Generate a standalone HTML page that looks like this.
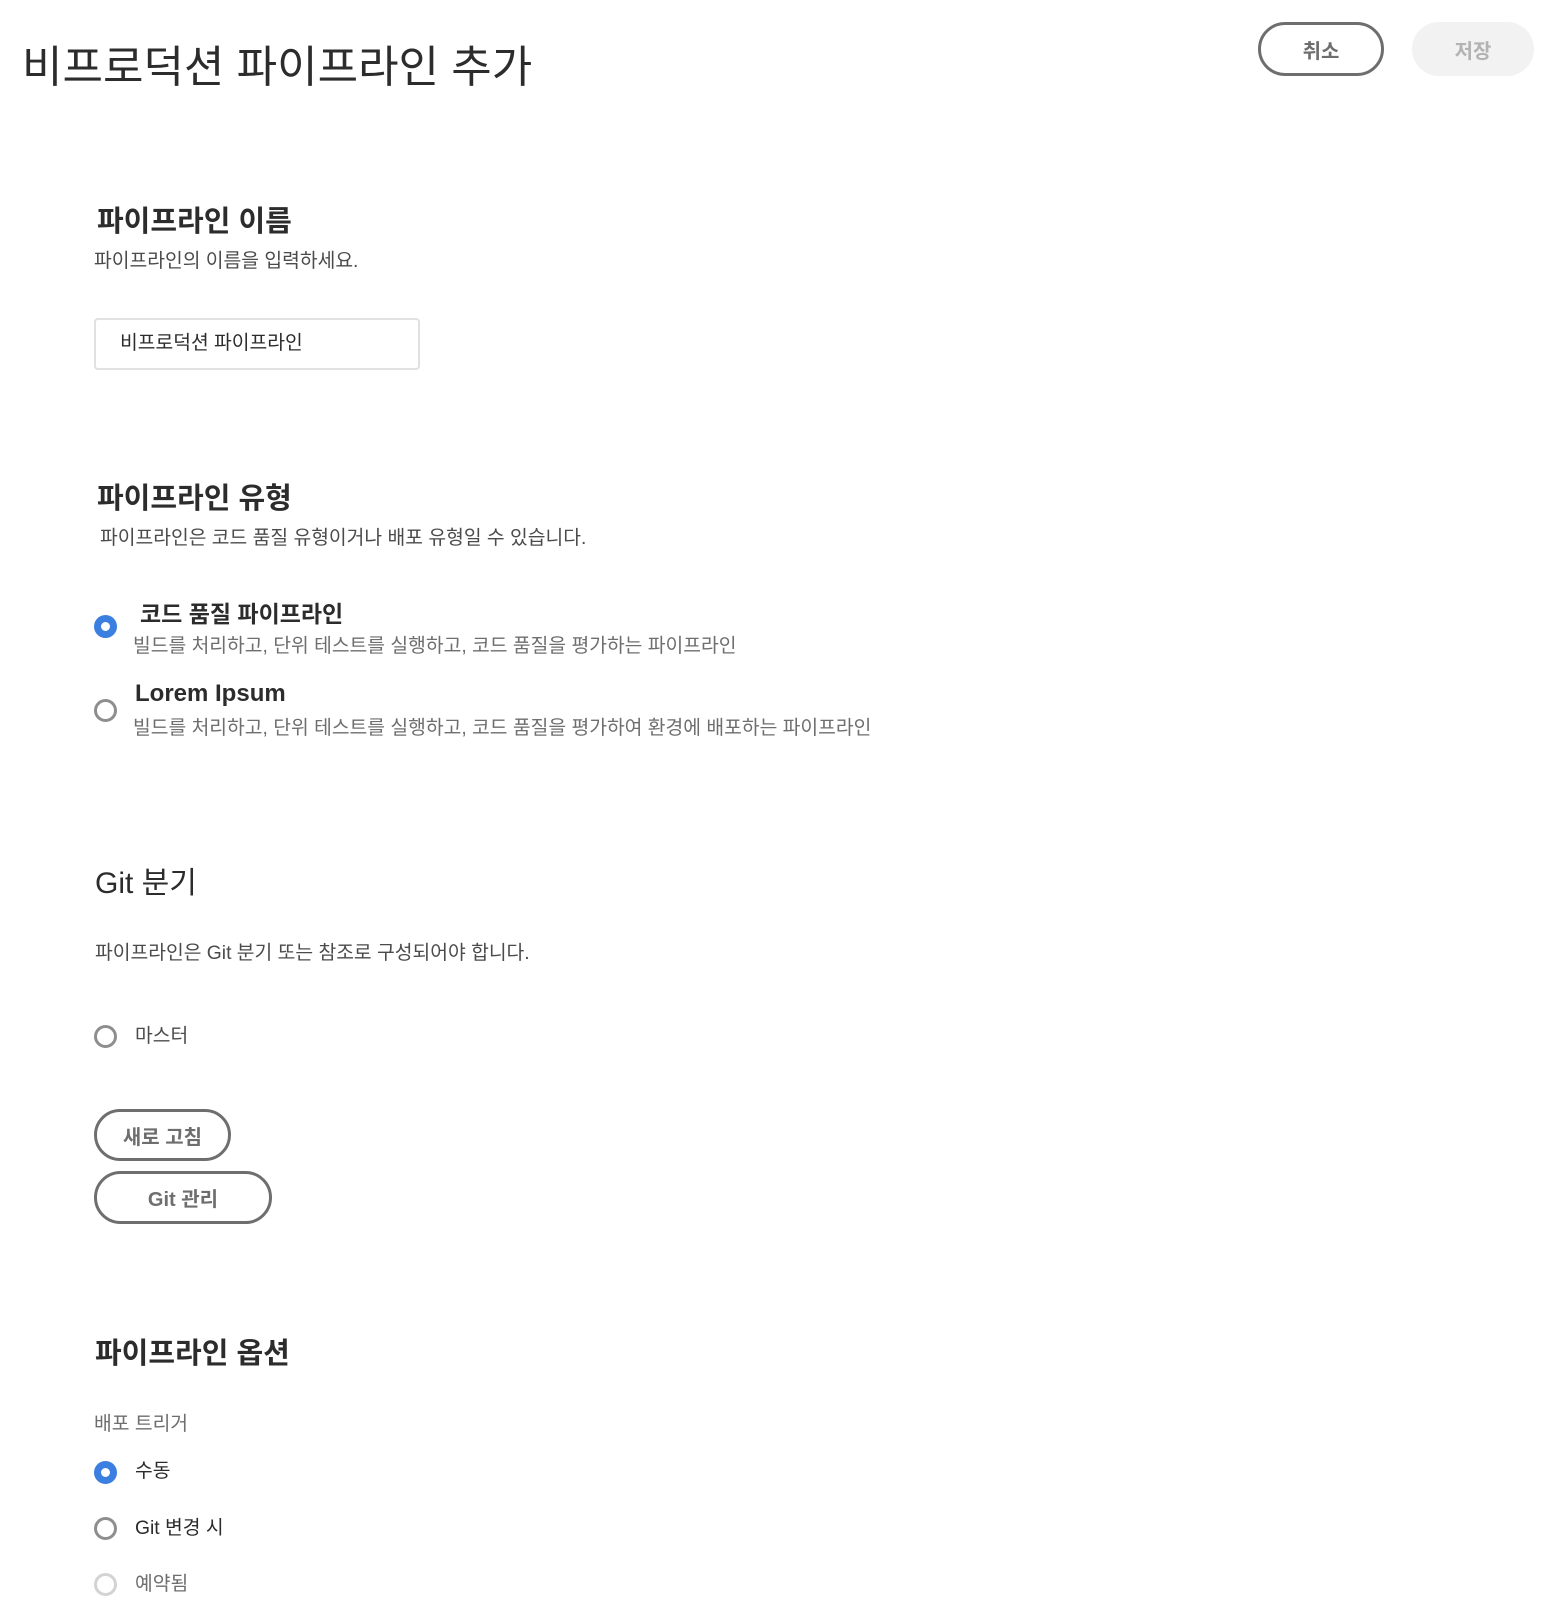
<!DOCTYPE html>
<html><head><meta charset="utf-8"><style>
body{margin:0;width:1554px;height:1624px;background:#fff;position:relative;overflow:hidden;font-family:"Liberation Sans","Noto Sans CJK KR",sans-serif;color:#2c2c2c}
.a{position:absolute;white-space:nowrap;line-height:1}
.h{font-size:29px;font-weight:bold;color:#2c2c2c}
.d{font-size:19.3px;color:#4b4b4b}
.s{font-size:19.3px;color:#6e6e6e}
.r{position:absolute;width:17px;height:17px;border:3px solid #8e8e8e;border-radius:50%;box-sizing:content-box}
.r.on{border:7px solid #3b7fe0;width:9px;height:9px;background:#fff}
.r.off{border-color:#d3d3d3}
.btn{position:absolute;border:3px solid #6e6e6e;border-radius:30px;box-sizing:border-box;font-size:20px;font-weight:bold;color:#6e6e6e;display:flex;align-items:center;justify-content:center}
</style></head><body>
<div class="a" style="left:22px;top:46px;font-size:44px;color:#2c2c2c">비프로덕션 파이프라인 추가</div>
<div class="btn" style="left:1258px;top:22px;width:126px;height:54px">취소</div>
<div class="btn" style="left:1412px;top:22px;width:122px;height:54px;border:none;background:#f2f2f2;color:#b3b3b3">저장</div>

<div class="a h" style="left:97px;top:208px">파이프라인 이름</div>
<div class="a d" style="left:94px;top:252px">파이프라인의 이름을 입력하세요.</div>
<div style="position:absolute;left:94px;top:318px;width:326px;height:52px;border:2px solid #e1e1e1;border-radius:4px;box-sizing:border-box"></div>
<div class="a d" style="left:120px;top:334px;color:#2c2c2c">비프로덕션 파이프라인</div>

<div class="a h" style="left:97px;top:485px">파이프라인 유형</div>
<div class="a d" style="left:100px;top:529px">파이프라인은 코드 품질 유형이거나 배포 유형일 수 있습니다.</div>
<div class="r on" style="left:94px;top:615px"></div>
<div class="a" style="left:140px;top:603px;font-size:23px;font-weight:bold">코드 품질 파이프라인</div>
<div class="a s" style="left:133px;top:637px">빌드를 처리하고, 단위 테스트를 실행하고, 코드 품질을 평가하는 파이프라인</div>
<div class="r" style="left:94px;top:699px"></div>
<div class="a" style="left:135px;top:682px;font-size:24px;font-weight:bold">Lorem Ipsum</div>
<div class="a s" style="left:133px;top:719px">빌드를 처리하고, 단위 테스트를 실행하고, 코드 품질을 평가하여 환경에 배포하는 파이프라인</div>

<div class="a h" style="left:95px;top:869px;font-weight:normal;font-size:30px">Git 분기</div>
<div class="a d" style="left:95px;top:944px">파이프라인은 Git 분기 또는 참조로 구성되어야 합니다.</div>
<div class="r" style="left:94px;top:1025px"></div>
<div class="a d" style="left:135px;top:1027px">마스터</div>
<div class="btn" style="left:94px;top:1109px;width:137px;height:52px">새로 고침</div>
<div class="btn" style="left:94px;top:1171px;width:178px;height:53px">Git 관리</div>

<div class="a h" style="left:95px;top:1340px">파이프라인 옵션</div>
<div class="a s" style="left:94px;top:1415px">배포 트리거</div>
<div class="r on" style="left:94px;top:1461px"></div>
<div class="a d" style="left:135px;top:1462px;color:#2c2c2c">수동</div>
<div class="r" style="left:94px;top:1517px"></div>
<div class="a d" style="left:135px;top:1519px;color:#2c2c2c">Git 변경 시</div>
<div class="r off" style="left:94px;top:1573px"></div>
<div class="a s" style="left:135px;top:1575px">예약됨</div>
</body></html>
